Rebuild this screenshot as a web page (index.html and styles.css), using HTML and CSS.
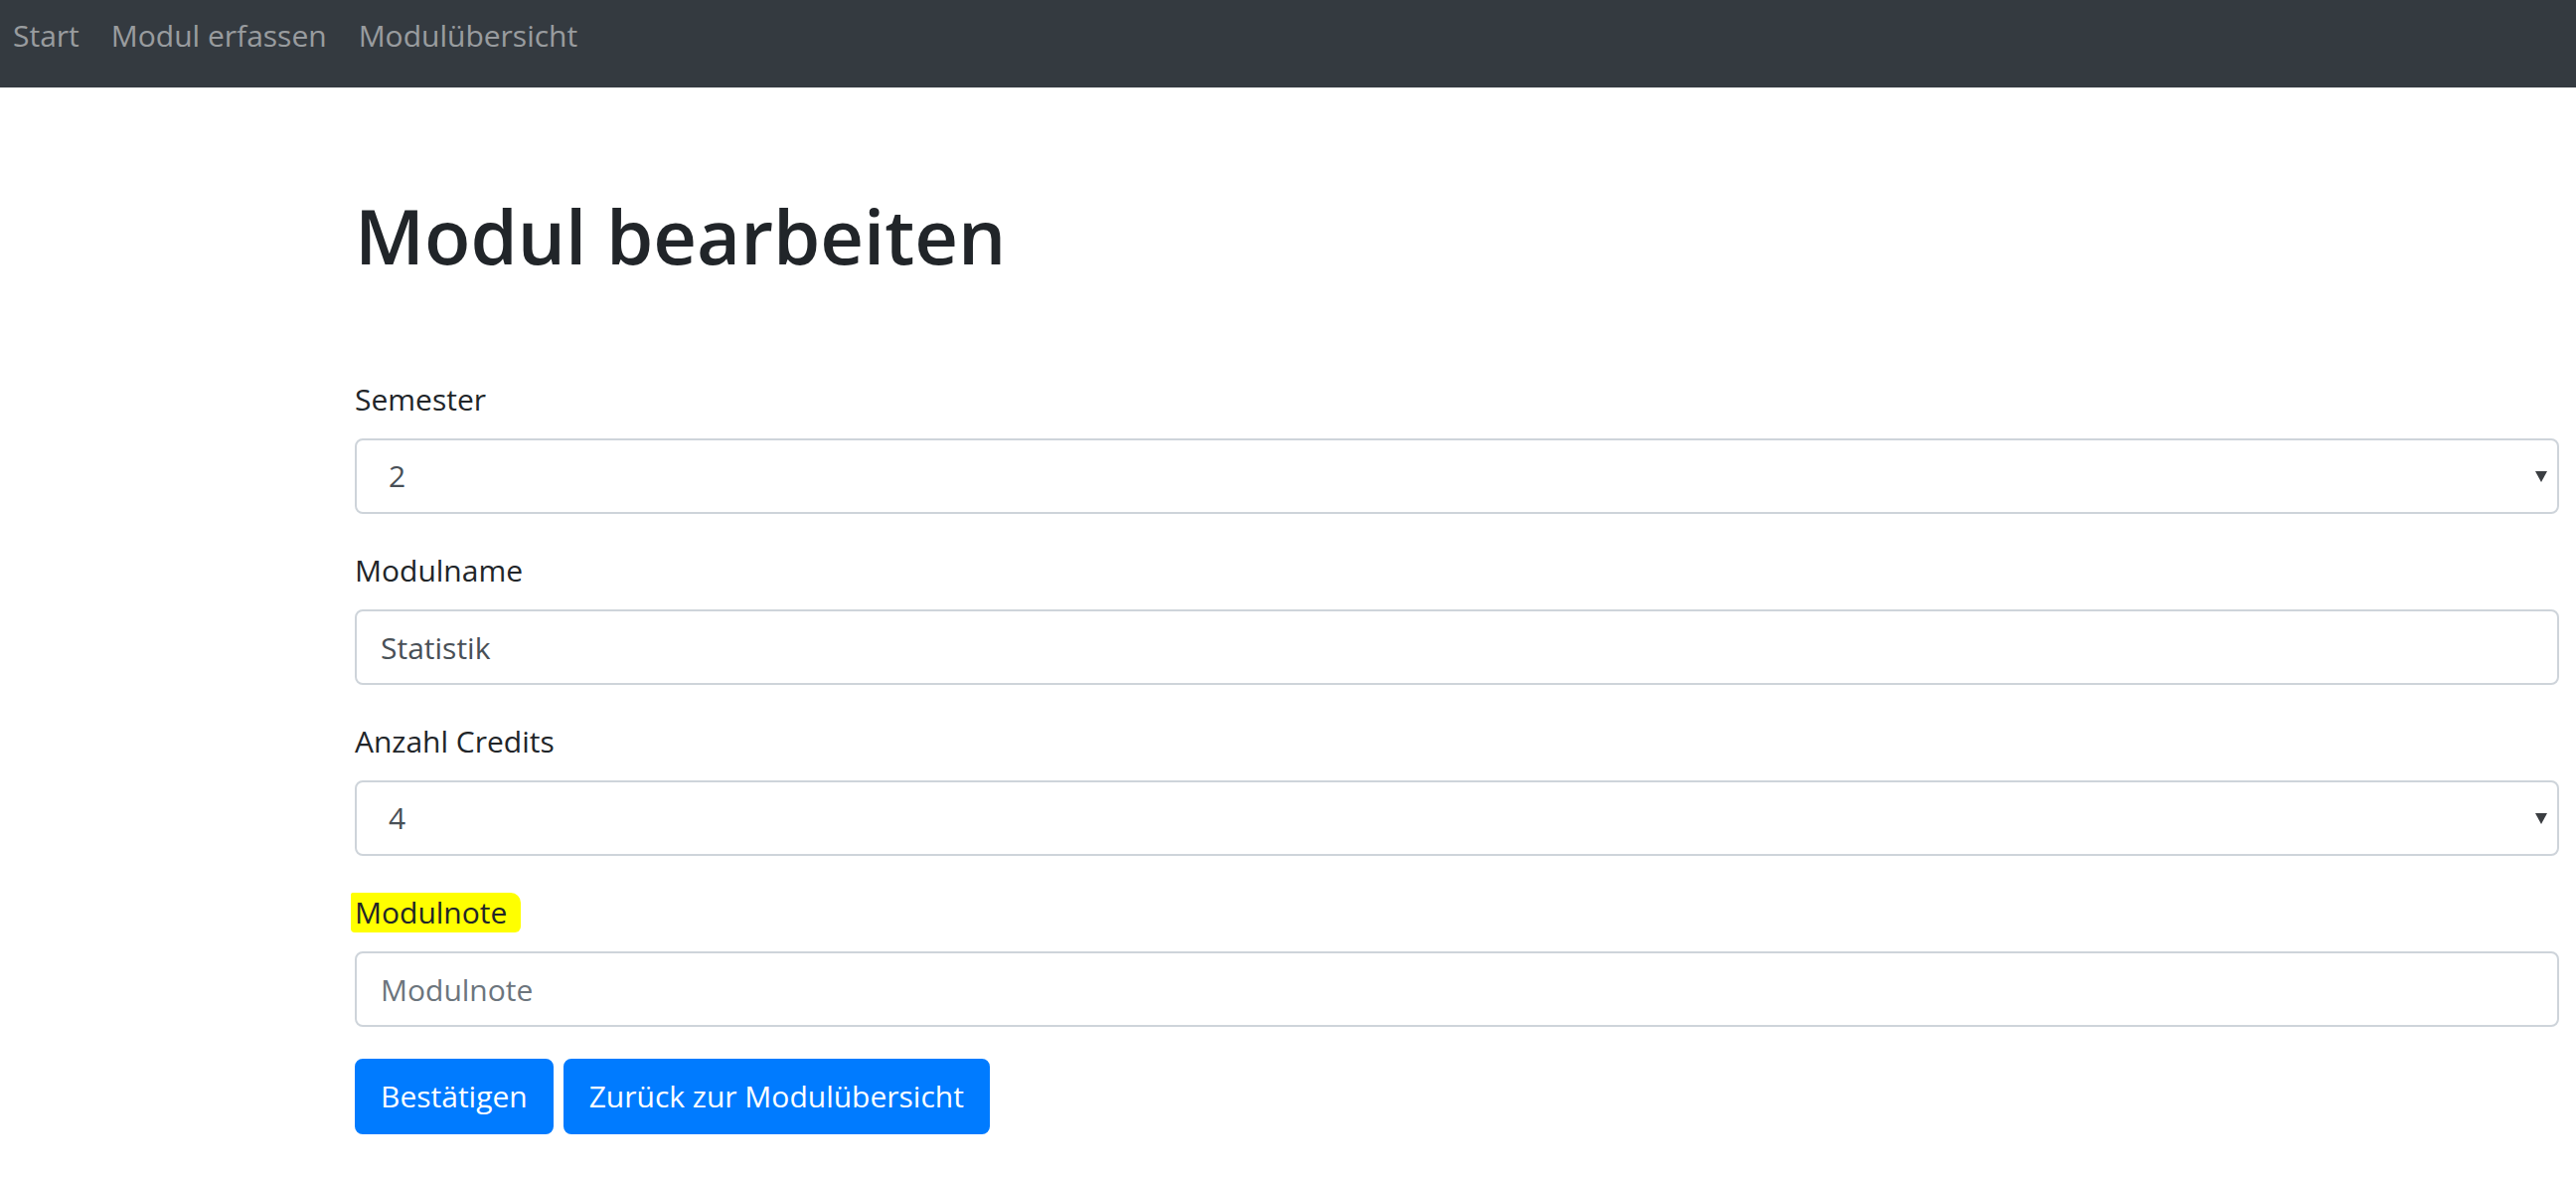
FILE: index.html
```html
<!DOCTYPE html>
<html lang="de">
<head>
<meta charset="utf-8">
<title>Modul bearbeiten</title>
<link rel="stylesheet" href="styles.css">
</head>
<body>
<nav class="navbar">
  <a class="nav-link" href="#">Start</a>
  <a class="nav-link" href="#">Modul erfassen</a>
  <a class="nav-link" href="#">Modulübersicht</a>
</nav>
<main class="container">
  <h1 class="title">Modul bearbeiten</h1>
  <form class="form">
    <div class="form-group">
      <label class="label" for="semester">Semester</label>
      <div class="select-wrap">
        <select class="control select" id="semester">
          <option>2</option>
        </select>
      </div>
    </div>
    <div class="form-group">
      <label class="label" for="name">Modulname</label>
      <input class="control input" id="name" type="text" value="Statistik">
    </div>
    <div class="form-group">
      <label class="label" for="credits">Anzahl Credits</label>
      <div class="select-wrap">
        <select class="control select" id="credits">
          <option>4</option>
        </select>
      </div>
    </div>
    <div class="form-group">
      <label class="label" for="note"><span class="highlight">Modulnote</span></label>
      <input class="control input" id="note" type="text" placeholder="Modulnote">
    </div>
    <div class="buttons">
      <button type="button" class="btn">Bestätigen</button>
      <button type="button" class="btn">Zurück zur Modulübersicht</button>
    </div>
  </form>
</main>
</body>
</html>
```
FILE: styles.css
```css
* { box-sizing: border-box; }

html, body {
  margin: 0;
  padding: 0;
  background: #ffffff;
}

body {
  font-family: "Open Sans", "Noto Sans", sans-serif;
  font-size: 30px;
  line-height: 48px;
  color: #212529;
}

.navbar {
  display: flex;
  align-items: flex-start;
  gap: 32px;
  height: 88px;
  padding: 12px 0 0 13px;
  background: #343a40;
}

.nav-link {
  color: rgba(255, 255, 255, 0.5);
  text-decoration: none;
  font-size: 30px;
  line-height: 48px;
}

.container {
  margin: 0 17px 0 357px;
  padding-top: 104px;
}

.title {
  margin: 0 0 95px 0;
  font-size: 76px;
  line-height: 90px;
  font-weight: 600;
  color: #212529;
}

.form-group {
  margin-bottom: 32px;
}

.label {
  display: block;
  margin-bottom: 16px;
  padding-top: 1px;
  height: 48px;
  line-height: 48px;
  color: #212529;
}

.highlight {
  display: inline-block;
  line-height: 40px;
  margin-left: -4px;
  padding: 0 14px 0 4px;
  background: #ffff00;
  border-radius: 2px 10px 6px 4px;
}

.control {
  display: block;
  width: 100%;
  height: 76px;
  margin: 0;
  padding: 12px 24px;
  font-family: inherit;
  font-size: 30px;
  line-height: 48px;
  color: #495057;
  background: #ffffff;
  border: 2px solid #ced4da;
  border-radius: 8px;
  outline: none;
}

.input::placeholder {
  color: #6c757d;
  opacity: 1;
}

.select-wrap {
  position: relative;
}

.select {
  appearance: none;
  -webkit-appearance: none;
  padding-left: 32px;
}

.select-wrap::after {
  content: "";
  position: absolute;
  right: 12px;
  top: 33px;
  width: 0;
  height: 0;
  border-left: 6px solid transparent;
  border-right: 6px solid transparent;
  border-top: 11px solid #3b3e42;
  pointer-events: none;
}

.buttons {
  display: flex;
  gap: 10px;
}

.btn {
  height: 76px;
  padding: 12px 24px;
  font-family: inherit;
  font-size: 30px;
  line-height: 48px;
  color: #ffffff;
  background: #007bff;
  border: 2px solid #007bff;
  border-radius: 8px;
  cursor: pointer;
}
```
